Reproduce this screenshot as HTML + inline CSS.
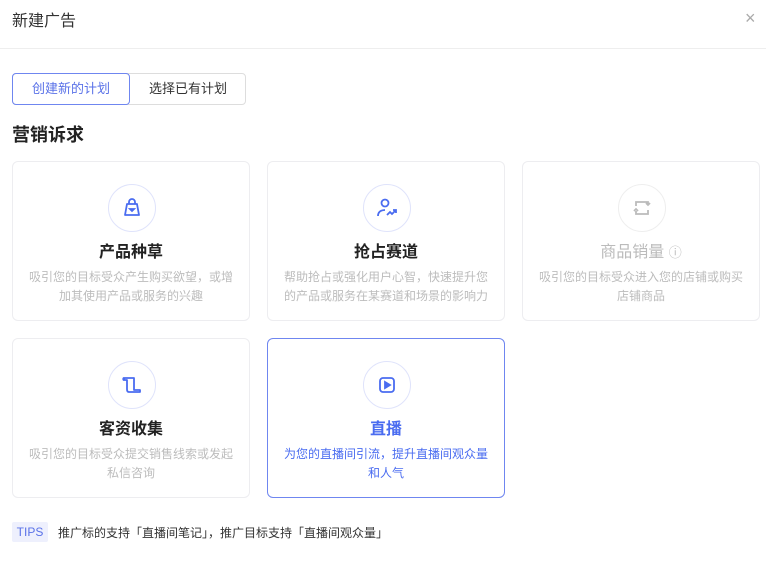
<!DOCTYPE html>
<html><head><meta charset="utf-8"><style>
*{margin:0;padding:0;box-sizing:border-box}
body{width:776px;height:567px;background:#fff;font-family:"Liberation Sans","Noto Sans CJK SC",sans-serif;position:relative;overflow:hidden;color:#333}
.abs{position:absolute}
.card{position:absolute;width:238px;height:160px;border:1px solid #ededf0;border-radius:6px;background:#fff;text-align:center}
.card.sel{border-color:#6f86f0}
.circ{position:absolute;left:95px;top:22px;width:48px;height:48px;border-radius:50%;border:1px solid #dfe3fb;display:flex;align-items:center;justify-content:center}
.t{position:absolute;left:0;right:0;top:76px;font-size:16px;font-weight:bold;color:#222}
.d{position:absolute;left:14px;right:14px;top:106px;font-size:12px;line-height:19px;color:#bcbcbc}
</style></head><body>
<div class="abs" style="left:12px;top:7px;font-size:16px;color:#333">新建广告</div>
<div class="abs" style="left:745px;top:8px;font-size:18px;color:#aaa">×</div>
<div class="abs" style="left:0;top:48px;width:766px;height:1px;background:#eee"></div>
<div class="abs" style="left:12px;top:73px;width:234px;height:32px;border:1px solid #ddd;border-radius:4px"></div>
<div class="abs" style="left:12px;top:73px;width:118px;height:32px;border:1px solid #6f86f0;border-radius:4px;color:#5a72e8;font-size:13px;line-height:30px;text-align:center">创建新的计划</div>
<div class="abs" style="left:131px;top:73px;width:114px;height:32px;color:#333;font-size:13px;line-height:32px;text-align:center">选择已有计划</div>
<div class="abs" style="left:12px;top:121px;font-size:18px;font-weight:bold;color:#222">营销诉求</div>

<div class="card" style="left:12px;top:161px"><div class="circ"><svg width="18" height="20" viewBox="0 0 18 20" fill="none" stroke="#4a6cf0" stroke-width="1.8"><path d="M6 6V4a3 3 0 0 1 6 0v2"/><path d="M4 6h10l2 11H2z" stroke-linejoin="round"/><path d="M7 11l2 2 2-2z" fill="#4a6cf0"/></svg></div><div class="t">产品种草</div><div class="d">吸引您的目标受众产生购买欲望，或增加其使用产品或服务的兴趣</div></div>
<div class="card" style="left:267px;top:161px"><div class="circ"><svg width="22" height="20" viewBox="0 0 22 20" fill="none" stroke="#4a6cf0" stroke-width="1.8"><circle cx="9" cy="5" r="3.5"/><path d="M2 18c0-4 3-6 7-6"/><path d="M11 17l3-3 2 2 4-4m-3 0h3v3"/></svg></div><div class="t">抢占赛道</div><div class="d">帮助抢占或强化用户心智，快速提升您的产品或服务在某赛道和场景的影响力</div></div>
<div class="card" style="left:522px;top:161px"><div class="circ" style="border-color:#eee"><svg width="20" height="18" viewBox="0 0 20 18" fill="none" stroke="#bbb" stroke-width="1.8"><path d="M4 7V3h12v3M16 11v4H4v-3M14 4l2 2 2-2M2 12l2-2 2 2"/></svg></div><div class="t" style="color:#bbb;font-weight:normal">商品销量 <span style="font-size:13px">ⓘ</span></div><div class="d">吸引您的目标受众进入您的店铺或购买店铺商品</div></div>
<div class="card" style="left:12px;top:338px"><div class="circ"><svg width="20" height="18" viewBox="0 0 20 18" fill="none" stroke="#4a6cf0" stroke-width="1.8"><path d="M2 2h10v12h6v2H7c-2 0-2-2-2-3V4H2z" stroke-linejoin="round"/><path d="M2 2c-1 0-1 2 0 2"/></svg></div><div class="t">客资收集</div><div class="d">吸引您的目标受众提交销售线索或发起私信咨询</div></div>
<div class="card sel" style="left:267px;top:338px"><div class="circ"><svg width="18" height="18" viewBox="0 0 18 18" fill="none" stroke="#4a6cf0" stroke-width="1.8"><rect x="2" y="2" width="14" height="14" rx="3"/><path d="M7 6l5 3-5 3z" fill="#4a6cf0"/></svg></div><div class="t" style="color:#4a6cf0">直播</div><div class="d" style="color:#4a6cf0">为您的直播间引流，提升直播间观众量和人气</div></div>

<div class="abs" style="left:12px;top:522px;width:36px;height:20px;background:#eef0fd;color:#5a72e8;font-size:12px;line-height:20px;text-align:center;border-radius:2px">TIPS</div>
<div class="abs" style="left:58px;top:524px;font-size:12px;color:#333">推广标的支持「直播间笔记」，推广目标支持「直播间观众量」</div>
</body></html>
